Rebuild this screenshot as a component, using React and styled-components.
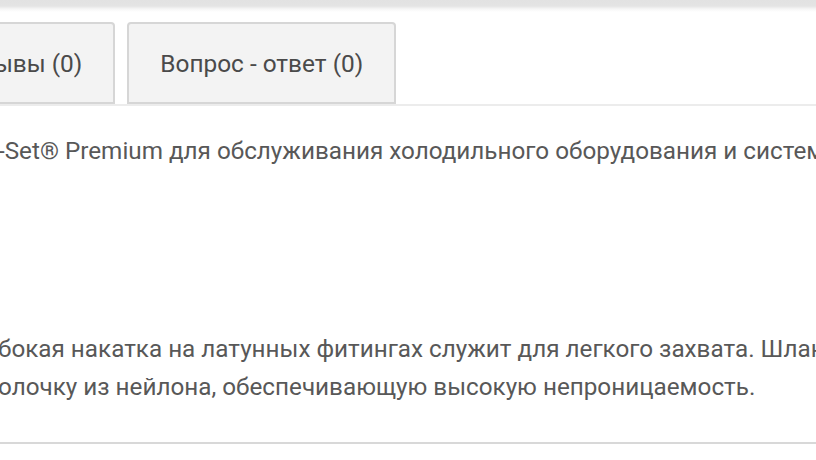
import React from 'react';
import styled, { createGlobalStyle } from 'styled-components';

const Global = createGlobalStyle`
	html, body {
		margin: 0;
		padding: 0;
		background: #fff;
		overflow: hidden;
	}
	body {
		font-family: Roboto, 'Liberation Sans', sans-serif;
	}
`;

const Page = styled.div`
	width: 816px;
	height: 460px;
	overflow: hidden;
	background: #fff;
`;

const TopShade = styled.div`
	height: 12px;
	background: linear-gradient(#e2e2e2 0, #e4e4e4 6px, #f6f6f6 9px, #fff 12px);
`;

const TabBar = styled.div`
	display: flex;
	gap: 12px;
	margin-top: 10px;
	margin-left: -80px;
	border-bottom: 2px solid #ececec;
`;

const Tab = styled.div`
	height: 78px;
	display: flex;
	align-items: center;
	padding: 0 31px;
	background: #f3f3f3;
	border: 2px solid #d6d6d6;
	border-radius: 4px 4px 0 0;
	color: #4a4a4a;
	font-size: 24.4px;
	white-space: nowrap;
`;

const Body = styled.div`
	padding: 26px 0 0 0;
	margin-left: -2px;
	border-bottom: 2px solid #d8d8d8;
	height: 338px;
	box-sizing: border-box;
`;

const Line = styled.p`
	margin: 0;
	color: #585858;
	font-size: 24.25px;
	line-height: 38px;
	white-space: nowrap;
`;

const Para = styled.div`
	margin-top: ${p => p.$top || 0}px;
`;

export default function App() {
	return (
		<Page>
			<Global />
			<TopShade />
			<TabBar>
				<Tab>Отзывы (0)</Tab>
				<Tab>Вопрос - ответ (0)</Tab>
			</TabBar>
			<Body>
				<Para>
					<Line>-Set® Premium для обслуживания холодильного оборудования и систем</Line>
				</Para>
				<Para $top={160}>
					<Line>бокая накатка на латунных фитингах служит для легкого захвата. Шланг</Line>
					<Line>олочку из нейлона, обеспечивающую высокую непроницаемость.</Line>
				</Para>
			</Body>
		</Page>
	);
}
